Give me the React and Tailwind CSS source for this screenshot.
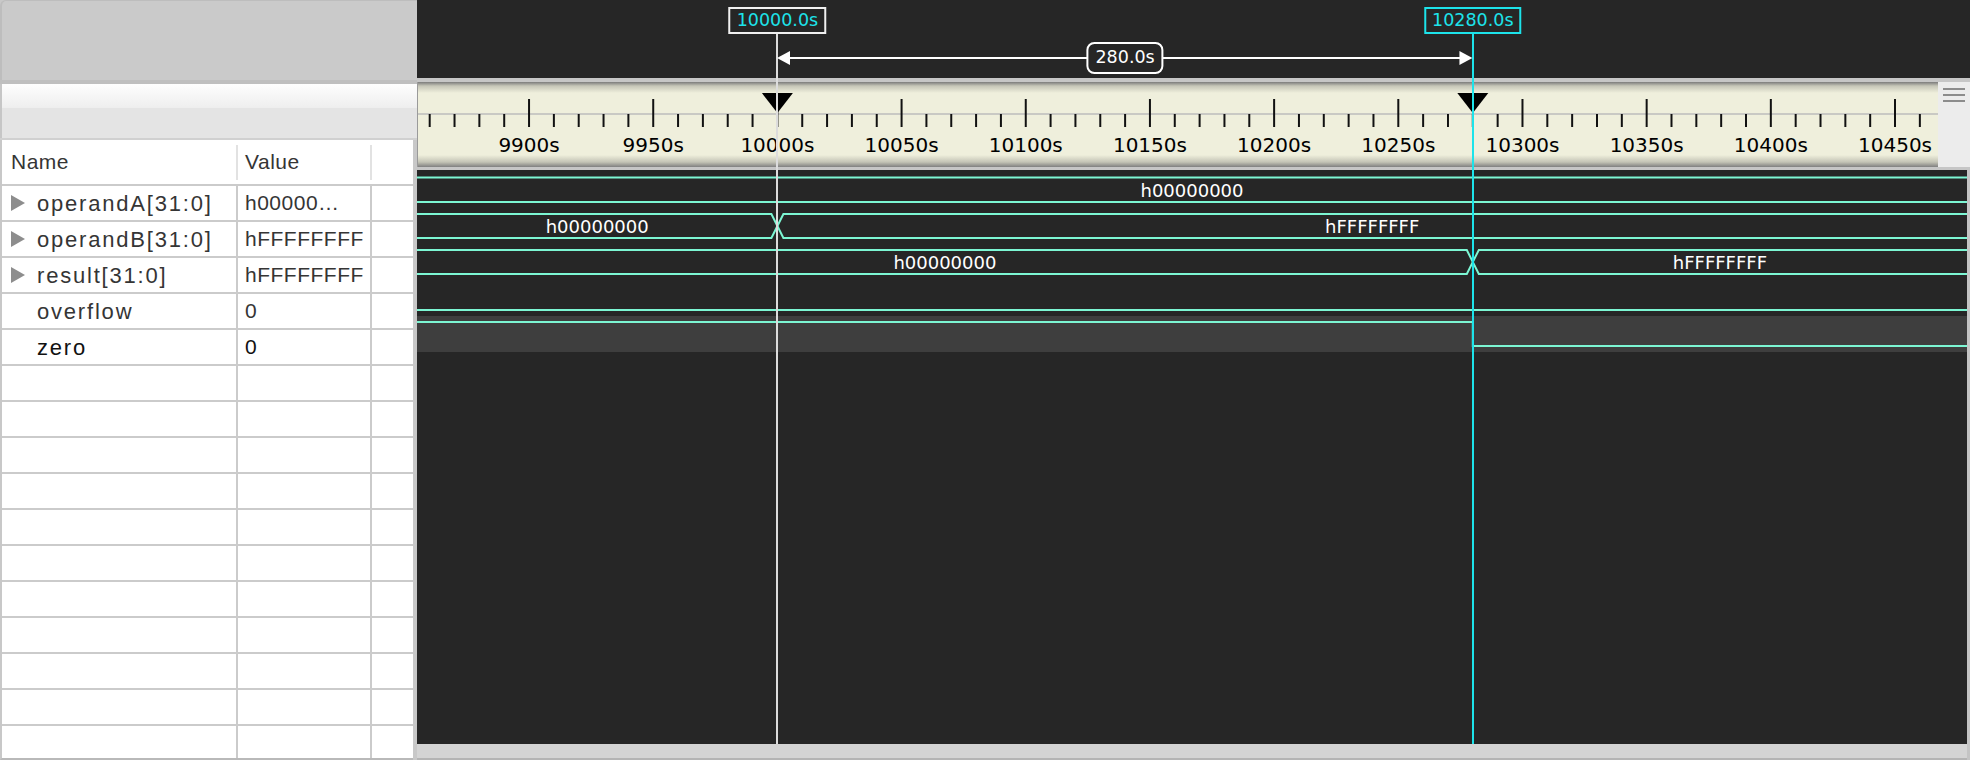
import React from "react";

// time axis: 10000s sits at x=360.4 inside the wave panel (panel starts at page x 417)
const PX_PER_S = 2.4836;
const xAt = (t) => 360.4 + (t - 10000) * PX_PER_S;

const M1 = xAt(10000);
const M2 = xAt(10280);
const WAVE = "#7cf6d3";
const CYAN = "#1de3ea";

const signals = [
  { name: "operandA[31:0]", value: "h00000…", bus: true },
  { name: "operandB[31:0]", value: "hFFFFFFFF", bus: true },
  { name: "result[31:0]", value: "hFFFFFFFF", bus: true },
  { name: "overflow", value: "0" },
  { name: "zero", value: "0", selected: true },
];

const ticks = [];
for (let t = 9860; t <= 10460; t += 10) ticks.push(t);

function Triangle() {
  return (
    <svg width="14" height="16" viewBox="0 0 14 16" className="shrink-0">
      <polygon points="0,0 14,8 0,16" fill="#8d8d8d" />
    </svg>
  );
}

function SignalTable() {
  const rows = [...signals];
  while (rows.length < 16) rows.push(null);

  return (
    <div className="mr-[4px] flex-1 overflow-hidden border-b-2 border-l-2 border-[#b9b9b9] border-l-[#c8c8c8] bg-white font-['Liberation_Sans',sans-serif] text-[21px] tracking-[0.5px] text-[#353535]">
      <div className="flex h-[46px] items-center border-b-2 border-[#cbcbcb]">
        <div className="w-[234px] pl-[9px]">Name</div>
        <div className="h-[35px] w-[2px] bg-[#e2e2e2]" />
        <div className="w-[132px] pl-[7px]">Value</div>
        <div className="h-[35px] w-[2px] bg-[#e2e2e2]" />
      </div>
      {rows.map((s, i) => (
        <div key={i} className="flex h-[36px] border-b-2 border-[#cbcbcb]">
          <div
            className={`flex w-[236px] items-center border-r-2 border-[#cbcbcb] pl-[9px] text-[22px] tracking-[1.8px] ${
              s && s.selected ? "text-[#111]" : ""
            }`}
          >
            <div className="flex w-[26px] items-center">{s && s.bus && <Triangle />}</div>
            {s && <span className="whitespace-nowrap">{s.name}</span>}
          </div>
          <div
            className={`flex w-[134px] items-center border-r-2 border-[#cbcbcb] pl-[7px] ${
              s && s.selected ? "text-[#111]" : ""
            }`}
          >
            {s && <span className="whitespace-nowrap">{s.value}</span>}
          </div>
          <div className="flex-1" />
        </div>
      ))}
    </div>
  );
}

function Ruler() {
  return (
    <div className="flex h-[85px]">
      <div className="h-full w-[1521px] bg-[linear-gradient(to_bottom,#7b7b7b_0px,#c6c6b8_4px,#efefdc_11px,#efefdc_73px,#c4c4b6_80px,#808080_85px)]">
        <svg width="1521" height="85">
          <line x1="0.5" y1="0" x2="0.5" y2="85" stroke="#9a9a9a" />
          <line x1="1" y1="32" x2="1521" y2="32" stroke="#bdbdbd" strokeWidth="1.5" />
          {ticks.map((t) => {
            const x = xAt(t);
            const major = t % 50 === 0;
            return (
              <g key={t}>
                <line x1={x} x2={x} y1={major ? 17 : 32} y2={45} stroke="#111" strokeWidth="2" />
                {major && (
                  <text
                    x={x}
                    y={70}
                    textAnchor="middle"
                    className="fill-black font-['DejaVu_Sans',sans-serif] text-[20px]"
                  >
                    {t}s
                  </text>
                )}
              </g>
            );
          })}
          {[M1, M2].map((m, i) => (
            <polygon key={i} points={`${m - 15.5},11 ${m + 15.5},11 ${m},31`} fill="#000" />
          ))}
        </svg>
      </div>
      <div className="flex-1 bg-[#ececec] pt-[6px]">
        <div className="ml-[5px] flex w-[22px] flex-col gap-[4px]">
          <div className="h-[2px] bg-[#8c8c8c]" />
          <div className="h-[2px] bg-[#8c8c8c]" />
          <div className="h-[2px] bg-[#8c8c8c]" />
        </div>
      </div>
    </div>
  );
}

function Waves() {
  const W = 1550;
  const label = "fill-white font-['DejaVu_Sans',sans-serif] text-[18px]";
  return (
    <svg width={W} height="574" className="block">
      <rect x="0" y="146" width={W} height="36" fill="#3e3e3e" />

      {/* operandA */}
      <line x1="0" x2={W} y1="7.5" y2="7.5" stroke={WAVE} strokeWidth="2" />
      <line x1="0" x2={W} y1="32" y2="32" stroke={WAVE} strokeWidth="2" />
      <text x={W / 2} y="20" textAnchor="middle" dominantBaseline="central" className={label}>
        h00000000
      </text>

      {/* operandB */}
      <path d={`M0 44 H${M1 - 6} L${M1 + 6} 68 H${W}`} fill="none" stroke={WAVE} strokeWidth="2" />
      <path d={`M0 68 H${M1 - 6} L${M1 + 6} 44 H${W}`} fill="none" stroke={WAVE} strokeWidth="2" />
      <text x={M1 / 2} y="56" textAnchor="middle" dominantBaseline="central" className={label}>
        h00000000
      </text>
      <text x={(M1 + W) / 2} y="56" textAnchor="middle" dominantBaseline="central" className={label}>
        hFFFFFFFF
      </text>

      {/* result */}
      <path d={`M0 80 H${M2 - 6} L${M2 + 6} 104 H${W}`} fill="none" stroke={WAVE} strokeWidth="2" />
      <path d={`M0 104 H${M2 - 6} L${M2 + 6} 80 H${W}`} fill="none" stroke={WAVE} strokeWidth="2" />
      <text x={M2 / 2} y="92" textAnchor="middle" dominantBaseline="central" className={label}>
        h00000000
      </text>
      <text x={(M2 + W) / 2} y="92" textAnchor="middle" dominantBaseline="central" className={label}>
        hFFFFFFFF
      </text>

      {/* overflow */}
      <line x1="0" x2={W} y1="140" y2="140" stroke={WAVE} strokeWidth="2" />

      {/* zero */}
      <path d={`M0 152 H${M2} V176 H${W}`} fill="none" stroke={WAVE} strokeWidth="2" />
    </svg>
  );
}

function Markers() {
  return (
    <div className="pointer-events-none absolute inset-0">
      <div className="absolute top-[34px] bottom-[16px] w-[2px] bg-[#dcdcdc]" style={{ left: M1 - 1 }} />
      <div className="absolute top-[34px] bottom-[16px] w-[2px]" style={{ left: M2 - 1, background: CYAN }} />

      <div
        className="absolute top-[7px] flex h-[27px] -translate-x-1/2 items-center border-2 border-[#f0f0f0] bg-[#262626] px-[6px] font-['DejaVu_Sans',sans-serif] text-[17.5px] leading-none text-[#1de3ea]"
        style={{ left: M1 }}
      >
        10000.0s
      </div>
      <div
        className="absolute top-[7px] flex h-[27px] -translate-x-1/2 items-center border-2 border-[#1de3ea] bg-[#262626] px-[6px] font-['DejaVu_Sans',sans-serif] text-[17.5px] leading-none text-[#1de3ea]"
        style={{ left: M2 }}
      >
        10280.0s
      </div>

      <svg className="absolute top-[50px]" width={M2 - M1} height="16" style={{ left: M1 }}>
        <line x1="10" x2={M2 - M1 - 10} y1="8" y2="8" stroke="#fff" strokeWidth="2" />
        <polygon points="0,8 13,1 13,15" fill="#fff" />
        <polygon points={`${M2 - M1},8 ${M2 - M1 - 13},1 ${M2 - M1 - 13},15`} fill="#fff" />
      </svg>

      <div
        className="absolute top-[42px] flex h-[32px] -translate-x-1/2 items-center rounded-[8px] border-2 border-white bg-[#262626] px-[7px] font-['DejaVu_Sans',sans-serif] text-[17.5px] leading-none text-white"
        style={{ left: (M1 + M2) / 2 }}
      >
        280.0s
      </div>
    </div>
  );
}

export default function App() {
  return (
    <div className="flex h-[760px] w-[1970px] overflow-hidden bg-[#262626]">
      <div className="flex w-[417px] shrink-0 flex-col bg-[#c8c8c8]">
        <div className="h-[80px] rounded-tl-[6px] border-t border-l-2 border-[#bdbdbd] bg-[#cacaca]" />
        <div className="h-[4px] bg-[#bfbfbf]" />
        <div className="h-[24px] border-l-2 border-[#c6c6c6] bg-gradient-to-b from-[#fefefe] to-[#eeeeee]" />
        <div className="h-[30px] border-l-2 border-[#c6c6c6] bg-[#e4e4e4]" />
        <div className="h-[2px] bg-[#d0d0d0]" />
        <SignalTable />
      </div>

      <div className="relative flex flex-1 flex-col">
        <div className="h-[78px] bg-[#262626]" />
        <div className="h-[4px] bg-[#c6c6c6]" />
        <Ruler />
        <div className="h-[3px] bg-[#c6c6c6]" />
        <div className="flex flex-1 flex-col border-r-[3px] border-[#c4c4c4]">
          <div className="flex-1 overflow-hidden bg-[#262626]">
            <Waves />
          </div>
          <div className="h-[14px] bg-[#d4d4d4]" />
          <div className="h-[2px] bg-[#b4b4b4]" />
        </div>
        <Markers />
      </div>
    </div>
  );
}
